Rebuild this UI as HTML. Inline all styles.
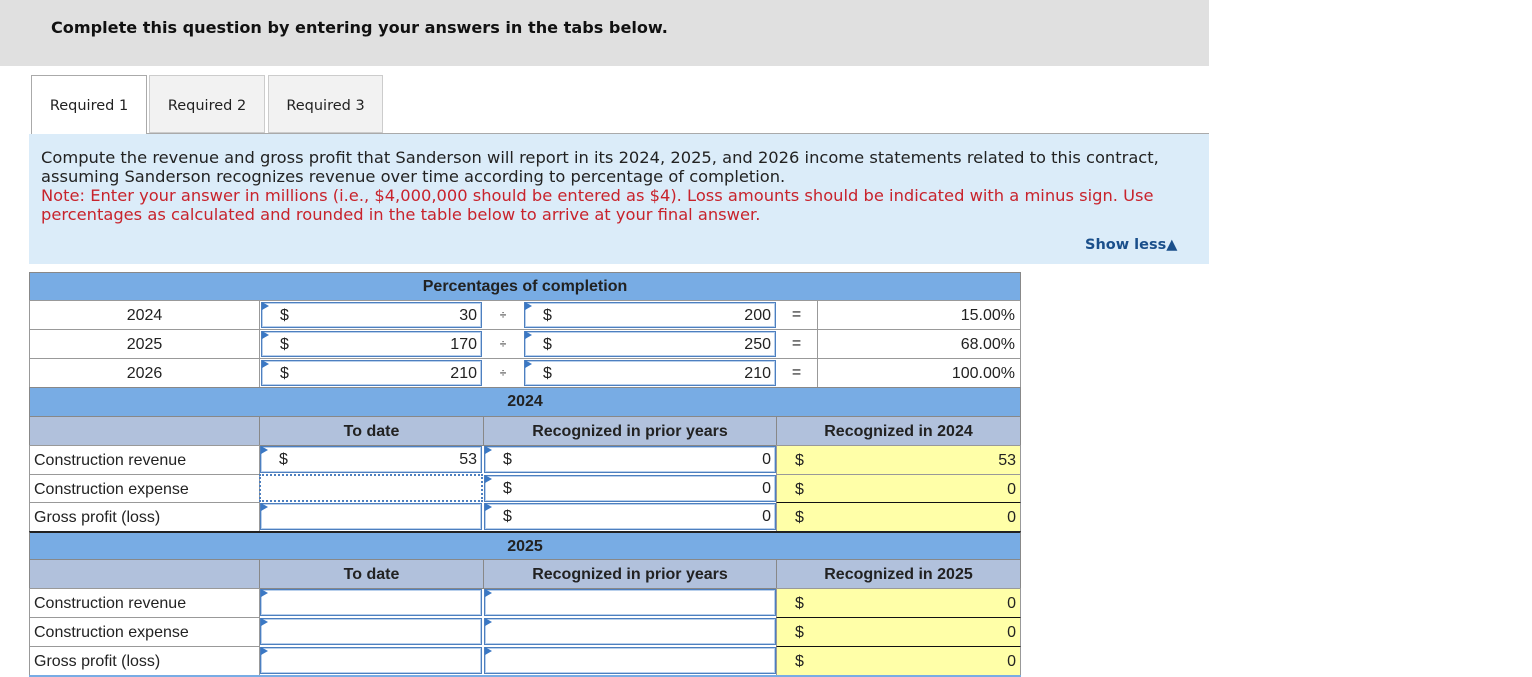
<!DOCTYPE html>
<html><head><meta charset="utf-8"><style>
body{margin:0;width:1532px;height:677px;background:#fff;position:relative;overflow:hidden;font-family:"Liberation Sans",Arial,sans-serif;font-size:16px;color:#222}
.a{position:absolute;box-sizing:border-box}
.v{font-family:"DejaVu Sans",Verdana,sans-serif}
.hd{background:#78ace4;font-weight:bold;text-align:center;line-height:28px;border:1px solid #888}
.sh{background:#b1c1dc;font-weight:bold;text-align:center;line-height:29px;border:1px solid #888}
.cl{border:1px solid #999;background:#fff;line-height:29px}
.in{border:1px solid #4d7fbf;box-shadow:inset 0 0 0 1px #b9d0ec;background:#fff;line-height:26px}
.in:before{content:"";position:absolute;left:0;top:-1px;border-left:7px solid #3b78c4;border-top:4px solid transparent;border-bottom:4px solid transparent}
.y{background:#ffffa8;border:1px solid #999;line-height:29px}
.r{position:absolute;right:4px;top:0}
.d{position:absolute;left:18px;top:0}
</style></head><body>
<div class="a" style="left:0;top:0;width:1209px;height:66px;background:#e0e0e0"></div>
<div class="a v" style="left:51px;top:18px;font-weight:bold;font-size:16.1px;color:#111">Complete this question by entering your answers in the tabs below.</div>

<div class="a v" style="left:31px;top:75px;width:116px;height:60px;background:#fff;border:1px solid #aaa;border-bottom:none;text-align:center;line-height:60px;font-size:14.5px">Required 1</div>
<div class="a v" style="left:149px;top:75px;width:116px;height:58px;background:#f2f2f2;border:1px solid #ccc;text-align:center;line-height:60px;font-size:14.5px">Required 2</div>
<div class="a v" style="left:268px;top:75px;width:115px;height:58px;background:#f2f2f2;border:1px solid #ccc;text-align:center;line-height:60px;font-size:14.5px">Required 3</div>
<div class="a" style="left:147px;top:133px;width:1062px;height:1px;background:#aaa"></div>
<div class="a v" style="left:29px;top:134px;width:1180px;height:130px;background:#dbecf9"></div>
<div class="a v" style="left:41px;top:148px;font-size:16.3px;line-height:19px;white-space:nowrap;color:#222">Compute the revenue and gross profit that Sanderson will report in its 2024, 2025, and 2026 income statements related to this contract,<br>assuming Sanderson recognizes revenue over time according to percentage of completion.<br><span style="color:#c8232c">Note: Enter your answer in millions (i.e., $4,000,000 should be entered as $4). Loss amounts should be indicated with a minus sign. Use<br>percentages as calculated and rounded in the table below to arrive at your final answer.</span></div>
<div class="a v" style="left:1085px;top:237px;font-weight:bold;font-size:14.5px;color:#1a4f8b">Show less▲</div>

<div class="a hd" style="left:29px;top:272px;width:992px;height:29px">Percentages of completion</div>
<div class="a cl" style="left:29px;top:300px;width:231px;height:30px;text-align:center">2024</div>
<div class="a cl" style="left:29px;top:329px;width:231px;height:30px;text-align:center">2025</div>
<div class="a cl" style="left:29px;top:358px;width:231px;height:30px;text-align:center">2026</div>
<div class="a cl" style="left:259px;top:300px;width:762px;height:30px"></div>
<div class="a cl" style="left:259px;top:329px;width:762px;height:30px"></div>
<div class="a cl" style="left:259px;top:358px;width:762px;height:30px"></div>
<div class="a in" style="left:261px;top:302px;width:221px;height:26px"><span class="d">$</span><span class="r">30</span></div>
<div class="a in" style="left:261px;top:331px;width:221px;height:26px"><span class="d">$</span><span class="r">170</span></div>
<div class="a in" style="left:261px;top:360px;width:221px;height:26px"><span class="d">$</span><span class="r">210</span></div>
<div class="a" style="left:483px;top:300px;width:40px;line-height:30px;text-align:center;font-size:12px">÷</div>
<div class="a" style="left:483px;top:329px;width:40px;line-height:30px;text-align:center;font-size:12px">÷</div>
<div class="a" style="left:483px;top:358px;width:40px;line-height:30px;text-align:center;font-size:12px">÷</div>
<div class="a in" style="left:524px;top:302px;width:252px;height:26px"><span class="d">$</span><span class="r">200</span></div>
<div class="a in" style="left:524px;top:331px;width:252px;height:26px"><span class="d">$</span><span class="r">250</span></div>
<div class="a in" style="left:524px;top:360px;width:252px;height:26px"><span class="d">$</span><span class="r">210</span></div>
<div class="a" style="left:776px;top:300px;width:41px;line-height:30px;text-align:center">=</div>
<div class="a" style="left:776px;top:329px;width:41px;line-height:30px;text-align:center">=</div>
<div class="a" style="left:776px;top:358px;width:41px;line-height:30px;text-align:center">=</div>
<div class="a cl" style="left:817px;top:300px;width:204px;height:30px"><span class="r" style="right:5px">15.00%</span></div>
<div class="a cl" style="left:817px;top:329px;width:204px;height:30px"><span class="r" style="right:5px">68.00%</span></div>
<div class="a cl" style="left:817px;top:358px;width:204px;height:30px"><span class="r" style="right:5px">100.00%</span></div>

<div class="a hd" style="left:29px;top:387px;width:992px;height:30px">2024</div>
<div class="a sh" style="left:29px;top:416px;width:231px;height:30px"></div>
<div class="a sh" style="left:259px;top:416px;width:225px;height:30px">To date</div>
<div class="a sh" style="left:483px;top:416px;width:294px;height:30px">Recognized in prior years</div>
<div class="a sh" style="left:776px;top:416px;width:245px;height:30px">Recognized in 2024</div>
<div class="a cl" style="left:29px;top:445px;width:231px;height:30px;padding-left:4px">Construction revenue</div>
<div class="a cl" style="left:29px;top:474px;width:231px;height:29px;padding-left:4px">Construction expense</div>
<div class="a cl" style="left:29px;top:502px;width:231px;height:30px;padding-left:4px">Gross profit (loss)</div>
<div class="a in" style="left:260px;top:446px;width:222px;height:27px"><span class="d">$</span><span class="r">53</span></div>
<div class="a" style="left:259px;top:474px;width:224px;height:28px;border:2px dotted #4d7fbf"></div>
<div class="a in" style="left:260px;top:503px;width:222px;height:27px"></div>
<div class="a in" style="left:484px;top:446px;width:292px;height:27px"><span class="d">$</span><span class="r">0</span></div>
<div class="a in" style="left:484px;top:475px;width:292px;height:27px"><span class="d">$</span><span class="r">0</span></div>
<div class="a in" style="left:484px;top:503px;width:292px;height:27px"><span class="d">$</span><span class="r">0</span></div>
<div class="a y" style="left:776px;top:445px;width:245px;height:30px"><span class="d">$</span><span class="r">53</span></div>
<div class="a y" style="left:776px;top:474px;width:245px;height:29px"><span class="d">$</span><span class="r">0</span></div>
<div class="a y" style="left:776px;top:502px;width:245px;height:30px;border-top:1px solid #111"><span class="d">$</span><span class="r">0</span></div>

<div class="a hd" style="left:29px;top:531px;width:992px;height:29px;border-top:2px solid #222;line-height:27px">2025</div>
<div class="a sh" style="left:29px;top:559px;width:231px;height:30px"></div>
<div class="a sh" style="left:259px;top:559px;width:225px;height:30px">To date</div>
<div class="a sh" style="left:483px;top:559px;width:294px;height:30px">Recognized in prior years</div>
<div class="a sh" style="left:776px;top:559px;width:245px;height:30px">Recognized in 2025</div>
<div class="a cl" style="left:29px;top:588px;width:231px;height:30px;padding-left:4px">Construction revenue</div>
<div class="a cl" style="left:29px;top:617px;width:231px;height:30px;padding-left:4px">Construction expense</div>
<div class="a cl" style="left:29px;top:646px;width:231px;height:30px;padding-left:4px">Gross profit (loss)</div>
<div class="a in" style="left:260px;top:589px;width:222px;height:27px"></div>
<div class="a in" style="left:260px;top:618px;width:222px;height:27px"></div>
<div class="a in" style="left:260px;top:647px;width:222px;height:27px"></div>
<div class="a in" style="left:484px;top:589px;width:292px;height:27px"></div>
<div class="a in" style="left:484px;top:618px;width:292px;height:27px"></div>
<div class="a in" style="left:484px;top:647px;width:292px;height:27px"></div>
<div class="a y" style="left:776px;top:588px;width:245px;height:30px"><span class="d">$</span><span class="r">0</span></div>
<div class="a y" style="left:776px;top:617px;width:245px;height:30px;border-top:1px solid #111"><span class="d">$</span><span class="r">0</span></div>
<div class="a y" style="left:776px;top:646px;width:245px;height:30px;border-top:1px solid #111"><span class="d">$</span><span class="r">0</span></div>
<div class="a" style="left:29px;top:675px;width:992px;height:2px;background:#78ace4"></div>
</body></html>
